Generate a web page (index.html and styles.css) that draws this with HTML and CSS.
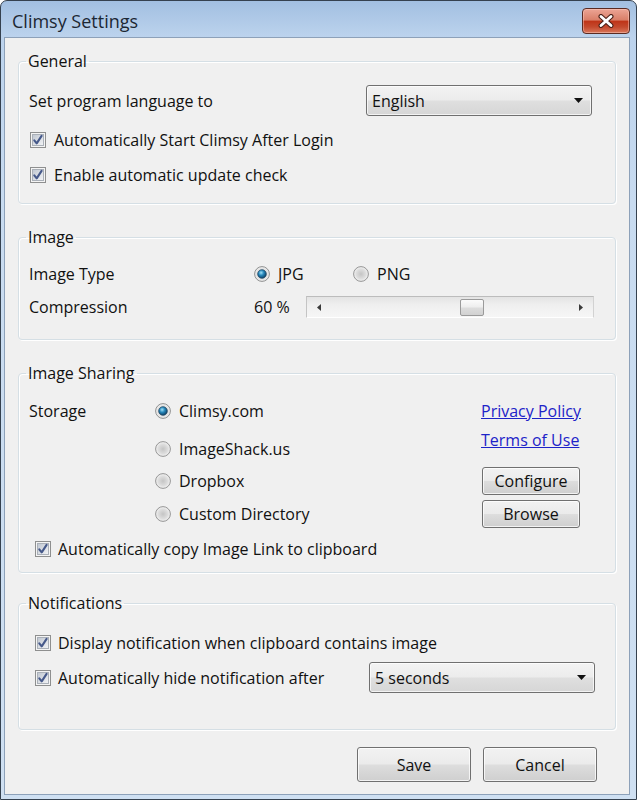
FILE: index.html
```html
<!DOCTYPE html>
<html lang="en">
<head>
<meta charset="utf-8">
<title>Climsy Settings</title>
<link rel="stylesheet" href="styles.css">
</head>
<body>
<svg class="defs" width="0" height="0" aria-hidden="true">
  <defs>
    <linearGradient id="cbIn" x1="0" y1="0" x2="1" y2="1">
      <stop offset="0" stop-color="#bfc6d0"/>
      <stop offset="1" stop-color="#f3f4f6"/>
    </linearGradient>
    <radialGradient id="rdBg" cx="0.5" cy="0.5" r="0.55">
      <stop offset="0" stop-color="#c4c4c4"/>
      <stop offset="0.6" stop-color="#dedede"/>
      <stop offset="1" stop-color="#fbfbfb"/>
    </radialGradient>
    <radialGradient id="rdDot" cx="0.4" cy="0.35" r="0.7">
      <stop offset="0" stop-color="#9fe0f7"/>
      <stop offset="0.45" stop-color="#2586ba"/>
      <stop offset="1" stop-color="#0f3a5c"/>
    </radialGradient>
    <symbol id="chk" viewBox="0 0 16 16">
      <rect x="0.5" y="0.5" width="15" height="15" fill="#f4f4f4" stroke="#8e8f8f"/>
      <rect x="2.5" y="2.5" width="11" height="11" fill="url(#cbIn)" stroke="#aab0b8"/>
      <path d="M4.3 8.3 L6.7 11.3 L11.6 3.9" fill="none" stroke="#46598a" stroke-width="2.1" stroke-linecap="round" stroke-linejoin="round"/>
    </symbol>
    <symbol id="rad" viewBox="0 0 16 16">
      <circle cx="8" cy="8" r="7.4" fill="url(#rdBg)" stroke="#959595"/>
    </symbol>
    <symbol id="radOn" viewBox="0 0 16 16">
      <circle cx="8" cy="8" r="7.4" fill="url(#rdBg)" stroke="#8e8f8f"/>
      <circle cx="8" cy="8" r="4.3" fill="url(#rdDot)" stroke="#17405e" stroke-width="0.7"/>
    </symbol>
  </defs>
</svg>

<div class="window">
  <div class="titlebar">
    <span class="title">Climsy Settings</span>
    <div class="close">
      <svg width="18" height="14" viewBox="0 0 18 14">
        <path d="M4 2.5 L14 11.5 M14 2.5 L4 11.5" stroke="#4d2219" stroke-width="5" stroke-linecap="round"/>
        <path d="M4 2.5 L14 11.5 M14 2.5 L4 11.5" stroke="#ffffff" stroke-width="2.8" stroke-linecap="round"/>
      </svg>
    </div>
  </div>

  <div class="client">
    <fieldset class="group g-general">
      <legend>General</legend>
      <div class="row row-lang">
        <span class="lbl">Set program language to</span>
        <div class="select sel-lang">
          <span>English</span>
          <svg class="arrow" width="9" height="5" viewBox="0 0 9 5"><path d="M0 0 H9 L4.5 5 Z" fill="#111"/></svg>
        </div>
      </div>
      <label class="check c-start"><svg class="box"><use href="#chk"/></svg><span>Automatically Start Climsy After Login</span></label>
      <label class="check c-update"><svg class="box"><use href="#chk"/></svg><span>Enable automatic update check</span></label>
    </fieldset>

    <fieldset class="group g-image">
      <legend>Image</legend>
      <div class="row row-type">
        <span class="lbl col-lbl">Image Type</span>
        <label class="radio opt-jpg"><svg class="box"><use href="#radOn"/></svg><span>JPG</span></label>
        <label class="radio"><svg class="box"><use href="#rad"/></svg><span>PNG</span></label>
      </div>
      <div class="row row-comp">
        <span class="lbl col-lbl">Compression</span>
        <span class="pct">60 %</span>
        <div class="hscroll">
          <span class="sarrow"><svg width="4" height="7" viewBox="0 0 4 7"><path d="M4 0 V7 L0 3.5 Z" fill="#3a3a3a"/></svg></span>
          <div class="track"><div class="thumb"></div></div>
          <span class="sarrow"><svg width="4" height="7" viewBox="0 0 4 7"><path d="M0 0 V7 L4 3.5 Z" fill="#3a3a3a"/></svg></span>
        </div>
      </div>
    </fieldset>

    <fieldset class="group g-share">
      <legend>Image Sharing</legend>
      <div class="share">
        <span class="lbl storage">Storage</span>
        <div class="radios">
          <label class="radio r1"><svg class="box"><use href="#radOn"/></svg><span>Climsy.com</span></label>
          <label class="radio r2"><svg class="box"><use href="#rad"/></svg><span>ImageShack.us</span></label>
          <label class="radio r3"><svg class="box"><use href="#rad"/></svg><span>Dropbox</span></label>
          <label class="radio r4"><svg class="box"><use href="#rad"/></svg><span>Custom Directory</span></label>
        </div>
        <div class="actions">
          <a class="link l-privacy" href="#">Privacy Policy</a>
          <a class="link l-terms" href="#">Terms of Use</a>
          <button class="btn btn-small b-config" type="button">Configure</button>
          <button class="btn btn-small b-browse" type="button">Browse</button>
        </div>
      </div>
      <label class="check indent c-copy"><svg class="box"><use href="#chk"/></svg><span>Automatically copy Image Link to clipboard</span></label>
    </fieldset>

    <fieldset class="group g-notify">
      <legend>Notifications</legend>
      <label class="check indent c-display"><svg class="box"><use href="#chk"/></svg><span>Display notification when clipboard contains image</span></label>
      <div class="row row-hide">
        <label class="check indent"><svg class="box"><use href="#chk"/></svg><span>Automatically hide notification after</span></label>
        <div class="select sel-time">
          <span>5 seconds</span>
          <svg class="arrow" width="9" height="5" viewBox="0 0 9 5"><path d="M0 0 H9 L4.5 5 Z" fill="#111"/></svg>
        </div>
      </div>
    </fieldset>

    <div class="footer">
      <button class="btn btn-big" type="button">Save</button>
      <button class="btn btn-big" type="button">Cancel</button>
    </div>
  </div>
</div>
</body>
</html>
```

FILE: styles.css
```css
* { box-sizing: border-box; }
html, body { margin: 0; padding: 0; }
body {
  width: 637px;
  height: 800px;
  background: #ffffff;
  font-family: "Open Sans", "Noto Sans", sans-serif;
  font-size: 16px;
  line-height: 20px;
  color: #111111;
}
.defs { display: block; width: 0; height: 0; overflow: hidden; }

.window {
  width: 637px;
  height: 800px;
  border: 1px solid #35414f;
  border-radius: 7px 7px 0 0;
  background: linear-gradient(180deg, #a2bfe1 0px, #bcd3ed 36px, #c8dbf0 200px, #cfe0f2 100%);
  display: flex;
  flex-direction: column;
  overflow: hidden;
}

.titlebar {
  height: 36px;
  flex: none;
  display: flex;
  align-items: flex-start;
  justify-content: space-between;
  padding: 0 6px 0 11px;
}
.title {
  margin-top: 7px;
  font-size: 18px;
  line-height: 26px;
  color: #1c2733;
}
.close {
  margin-top: 7px;
  width: 48px;
  height: 26px;
  border: 1px solid #5a2b23;
  border-radius: 4px;
  background: linear-gradient(180deg, #eca595 0%, #d97f69 45%, #bf3519 52%, #c44a2e 75%, #d9785c 100%);
  box-shadow: inset 0 0 0 1px rgba(255, 210, 200, 0.45);
  display: flex;
  align-items: center;
  justify-content: center;
}

.client {
  flex: 1;
  margin: 0 6px 4px 3px;
  border: 1px solid #8da1b9;
  background: #f0f0f0;
  display: flex;
  flex-direction: column;
  padding: 13px 13px 0;
}

.group {
  margin: 0;
  border: 1px solid #d5dfe5;
  border-radius: 4px;
  padding: 0 10px;
  box-shadow: inset 1px 1px 0 #ffffff, 1px 1px 0 #ffffff;
}
.group legend {
  padding: 0 2px;
  margin-left: -3px;
  line-height: 20px;
  color: #111111;
}
.g-general { padding-top: 14px; padding-bottom: 16px; }
.g-image { margin-top: 23px; padding-top: 15px; padding-bottom: 20px; }
.g-share { margin-top: 23px; padding-top: 16px; padding-bottom: 11px; }
.g-notify { margin-top: 20px; padding-top: 18px; padding-bottom: 36px; }

.row { display: flex; align-items: center; }
.lbl { white-space: nowrap; }

.check, .radio {
  display: flex;
  align-items: center;
  height: 24px;
  gap: 8px;
  white-space: nowrap;
}
.box { width: 16px; height: 16px; flex: none; }
.check .box { margin-left: 1px; }
.check.indent { gap: 7px; }
.check.indent .box { margin-left: 6px; }

/* General */
.row-lang { height: 31px; justify-content: space-between; }
.sel-lang { margin-right: 13px; }
.c-start { margin-top: 12px; }
.c-update { margin-top: 11px; }

.select {
  width: 226px;
  height: 31px;
  border: 1px solid #707070;
  border-radius: 3px;
  background: linear-gradient(180deg, #f3f3f3 0%, #ececec 48%, #dfdfdf 52%, #d6d6d6 100%);
  box-shadow: inset 0 0 0 1px rgba(255, 255, 255, 0.7);
  display: flex;
  align-items: center;
  justify-content: space-between;
  padding: 0 8px 0 5px;
}
.select .arrow { flex: none; }

/* Image */
.col-lbl { width: 225px; flex: none; }
.opt-jpg { width: 99px; }
.row-comp { margin-top: 9px; height: 24px; }
.pct { width: 52px; flex: none; white-space: nowrap; }
.hscroll {
  width: 288px;
  height: 22px;
  border: 1px solid #d2d2d2;
  border-top-color: #bcbcbc;
  border-left-color: #c4c4c4;
  border-bottom-color: #ffffff;
  background: linear-gradient(180deg, #e3e3e3 0%, #efefef 40%, #f6f6f6 100%);
  display: flex;
  align-items: center;
}
.sarrow {
  width: 24px;
  height: 20px;
  flex: none;
  display: flex;
  align-items: center;
  justify-content: center;
}
.track { flex: 1; height: 20px; display: flex; align-items: center; }
.thumb {
  margin-left: 129px;
  width: 24px;
  height: 17px;
  border: 1px solid #9a9a9a;
  border-radius: 2px;
  background: linear-gradient(180deg, #fbfbfb 0%, #eeeeee 45%, #dcdcdc 55%, #d2d2d2 100%);
}

/* Image sharing */
.share { display: flex; align-items: flex-start; }
.storage { width: 126px; flex: none; line-height: 24px; }
.radios { width: 326px; flex: none; display: flex; flex-direction: column; }
.r2 { margin-top: 14px; }
.r3 { margin-top: 8px; }
.r4 { margin-top: 9px; }
.actions { display: flex; flex-direction: column; align-items: flex-start; }
.link {
  color: #1d23c8;
  text-decoration: underline;
  line-height: 24px;
  height: 24px;
  white-space: nowrap;
}
.l-terms { margin-top: 5px; }
.b-config { margin-top: 15px; margin-left: 1px; }
.b-browse { margin-top: 5px; margin-left: 1px; }
.c-copy { margin-top: 9px; }

.btn {
  font-family: inherit;
  font-size: 16px;
  color: #111111;
  border: 1px solid #707070;
  border-radius: 3px;
  background: linear-gradient(180deg, #f2f2f2 0%, #ebebeb 48%, #dddddd 52%, #cfcfcf 100%);
  box-shadow: inset 0 0 0 1px rgba(255, 255, 255, 0.75);
  padding: 0;
  display: flex;
  align-items: center;
  justify-content: center;
}
.btn-small { width: 98px; height: 28px; }
.btn-big { width: 114px; height: 35px; }

/* Notifications */
.row-hide { margin-top: 7px; justify-content: space-between; }
.sel-time { margin-right: 10px; }

.footer {
  display: flex;
  justify-content: flex-end;
  gap: 12px;
  margin-top: 17px;
  padding-right: 19px;
}
```
